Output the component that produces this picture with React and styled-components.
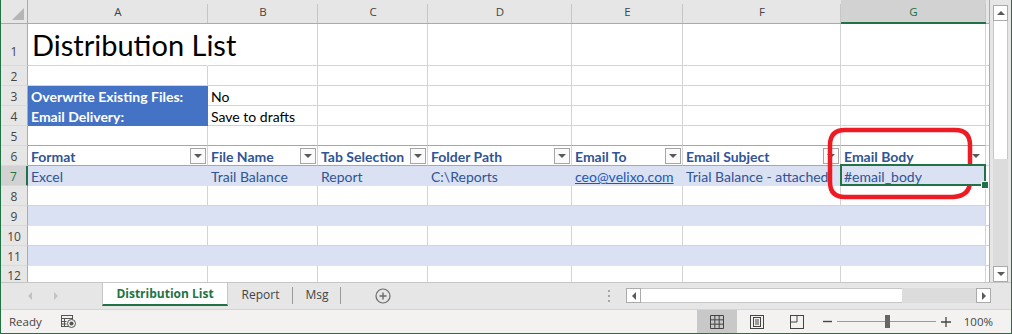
import React from 'react';
import styled, { createGlobalStyle } from 'styled-components';

// Excel-like sheet: Distribution List

const GREEN = '#217346';
const GRID = '#d4d4d4';
const BAND = '#d9e1f2';
const TABLE_RULE = '#8ea9db';
const TABLE_TEXT = '#305496';
const LABEL_FILL = '#4472c4';

const GlobalStyle = createGlobalStyle`
  html, body { margin: 0; padding: 0; background: #fff; }
  body { font-family: Lato, "Liberation Sans", sans-serif; }
  * { box-sizing: border-box; }
`;

const Window = styled.div`
  position: relative;
  width: 1012px;
  height: 334px;
  border: 1px solid ${GREEN};
  border-top: none;
  display: flex;
  flex-direction: column;
  background: #fff;
  overflow: hidden;
`;

const Workspace = styled.div`
  display: flex;
  height: 282px;
`;

const Sheet = styled.div`
  width: 989px;
  display: grid;
  grid-template-columns: 27px 180px 110px 110px 144px 111px 158px 145px 1fr;
  grid-template-rows: 24px 42px repeat(10, 20px) 1fr;
  border-right: 1px solid #ababab;
  overflow: hidden;
`;

const Corner = styled.div`
  background: #e6e6e6;
  border-right: 1px solid #ababab;
  border-bottom: 1px solid #ababab;
  display: flex;
  align-items: flex-end;
  justify-content: flex-end;
  padding: 0 3px 3px 0;
`;

const ColHead = styled.div`
  background-color: ${(p) => (p.$active ? '#d2d2d2' : '#e6e6e6')};
  background-image: linear-gradient(#c6c6c6, #c6c6c6);
  background-size: 1px calc(100% - 4px);
  background-position: right bottom;
  background-repeat: no-repeat;
  border-bottom: ${(p) => (p.$active ? `2px solid ${GREEN}` : '1px solid #ababab')};
  display: flex;
  align-items: center;
  justify-content: center;
  padding-top: ${(p) => (p.$active ? '1px' : '0')};
  font: 11.5px "Open Sans", sans-serif;
  color: ${(p) => (p.$active ? GREEN : '#444')};
`;

const RowHead = styled.div`
  background: ${(p) => (p.$active ? '#d2d2d2' : '#e6e6e6')};
  border-right: ${(p) => (p.$active ? `2px solid ${GREEN}` : '1px solid #ababab')};
  border-bottom: 1px solid #d9d9d9;
  display: flex;
  align-items: center;
  justify-content: center;
  padding-top: ${(p) => (p.$tall ? '14px' : '1px')};
  font: 12px "Open Sans", sans-serif;
  color: ${(p) => (p.$active ? GREEN : '#444')};
`;

const Cell = styled.div`
  position: relative;
  z-index: ${(p) => p.$z || 0};
  display: flex;
  align-items: center;
  padding: 2px 1px 0 3px;
  background: ${(p) => p.$fill || '#fff'};
  border-right: 1px solid ${(p) => p.$edge || p.$fill || GRID};
  border-bottom: 1px solid ${(p) => p.$rule || p.$fill || GRID};
  color: ${(p) => p.$color || '#000'};
  font-size: 14px;
  font-weight: ${(p) => (p.$bold ? 700 : 400)};
  white-space: nowrap;
`;

const TitleCell = styled(Cell)`
  font-size: 29px;
  padding: 0 0 0 4px;
  border-right-color: #fff;
  z-index: 1;
`;

const HeadCell = styled(Cell)`
  color: ${TABLE_TEXT};
  font-weight: 700;
  padding: 1px 1px 0 3px;
  border-bottom-color: ${TABLE_RULE};
`;

const FilterBtn = styled.span`
  margin-left: auto;
  flex: none;
  width: 16px;
  height: 16px;
  border: 1px solid ${(p) => (p.$plain ? 'transparent' : '#a6a6a6')};
  background: ${(p) => (p.$plain ? 'transparent' : '#fafafa')};
  display: flex;
  align-items: center;
  justify-content: center;
  &::after {
    content: '';
    border-left: 4px solid transparent;
    border-right: 4px solid transparent;
    border-top: 4px solid #595959;
  }
`;

const Link = styled.span`
  color: #2058b8;
  text-decoration: underline;
`;

const Selection = styled.div`
  position: absolute;
  left: -1px;
  top: -2px;
  right: -1px;
  bottom: -1px;
  border: 2px solid ${GREEN};
  &::after {
    content: '';
    position: absolute;
    right: -5px;
    bottom: -5px;
    width: 6px;
    height: 6px;
    background: ${GREEN};
    border: 1px solid #fff;
  }
`;

const VScroll = styled.div`
  flex: 1;
  background: #e6e6e6;
  display: flex;
  flex-direction: column;
  padding: 5px 3px 0 3px;
`;

const ScrollBtn = styled.div`
  flex: none;
  width: ${(p) => (p.$h ? '15px' : '100%')};
  height: ${(p) => (p.$h ? '100%' : '16px')};
  background: #fff;
  border: 1px solid #ababab;
  display: flex;
  align-items: center;
  justify-content: center;
`;

const VThumb = styled.div`
  height: 138px;
  background: #fff;
  border-left: 1px solid #c6c6c6;
  border-right: 1px solid #c6c6c6;
`;

const VTrack = styled.div`
  flex: 1;
  background: #dcdcdc;
`;

const TabBar = styled.div`
  height: 27px;
  background: #e6e6e6;
  border-top: 1px solid #c6c6c6;
  display: flex;
  align-items: flex-start;
  padding-right: 20px;
`;

const TabNav = styled.div`
  width: 101px;
  height: 25px;
  display: flex;
  align-items: center;
  gap: 22px;
  padding-left: 27px;
`;

const Tab = styled.div`
  height: ${(p) => (p.$active ? '23px' : '25px')};
  width: ${(p) => p.$w}px;
  display: flex;
  align-items: center;
  justify-content: center;
  font: ${(p) => (p.$active ? 700 : 400)} 12px "Open Sans", sans-serif;
  color: ${(p) => (p.$active ? GREEN : '#444')};
  background: ${(p) => (p.$active ? '#fff' : 'transparent')};
  border-left: ${(p) => (p.$active ? '1px solid #c6c6c6' : 'none')};
  border-right: ${(p) => (p.$active ? '1px solid #c6c6c6' : 'none')};
  border-bottom: ${(p) => (p.$active ? `2px solid ${GREEN}` : 'none')};
  position: relative;
  padding-bottom: ${(p) => (p.$active ? '0' : '2px')};
  &::after {
    content: '';
    display: ${(p) => (p.$sep ? 'block' : 'none')};
    position: absolute;
    right: 0;
    top: 4px;
    height: 17px;
    width: 1px;
    background: #9a9a9a;
  }
`;

const AddSheet = styled.div`
  width: 84px;
  height: 25px;
  display: flex;
  align-items: center;
  justify-content: center;
`;

const Spacer = styled.div`
  flex: 1;
`;

const Grip = styled.div`
  height: 25px;
  width: 6px;
  margin-right: 14px;
  display: flex;
  flex-direction: column;
  align-items: center;
  justify-content: center;
  gap: 3px;
  & > i {
    width: 2px;
    height: 2px;
    background: #a6a6a6;
  }
`;

const HScroll = styled.div`
  width: 365px;
  height: 15px;
  margin-top: 5px;
  display: flex;
`;

const HThumb = styled.div`
  width: 261px;
  background: #fff;
  border-top: 1px solid #c6c6c6;
  border-bottom: 1px solid #c6c6c6;
`;

const HTrack = styled.div`
  flex: 1;
  background: #dcdcdc;
`;

const StatusBar = styled.div`
  height: 24px;
  background: #f3f2f1;
  border-top: 1px solid #d4d4d4;
  display: flex;
  align-items: stretch;
  padding: 0 18px 0 8px;
  font: 11.5px "Open Sans", sans-serif;
  color: #444;
`;

const StatusText = styled.div`
  display: flex;
  align-items: center;
  margin-left: ${(p) => p.$ml || 0}px;
`;

const StatusIcon = styled.div`
  display: flex;
  align-items: center;
  margin-left: ${(p) => p.$ml || 0}px;
`;

const ViewBtn = styled.div`
  width: 40px;
  display: flex;
  align-items: center;
  justify-content: center;
  background: ${(p) => (p.$active ? '#c8c8c8' : 'transparent')};
`;

const ZoomSlider = styled.div`
  position: relative;
  width: 99px;
  margin-left: 5px;
  display: flex;
  align-items: center;
  &::before {
    content: '';
    width: 100%;
    height: 1px;
    background: #9a9a9a;
  }
`;

const SliderThumb = styled.span`
  position: absolute;
  left: 48px;
  top: 5px;
  width: 5px;
  height: 13px;
  background: #666;
`;

const Annotation = styled.svg`
  position: absolute;
  left: 824px;
  top: 125px;
  pointer-events: none;
`;

const COLS = ['A', 'B', 'C', 'D', 'E', 'F', 'G'];
const HEADERS = ['Format', 'File Name', 'Tab Selection', 'Folder Path', 'Email To', 'Email Subject', 'Email Body'];
const DATA = ['Excel', 'Trail Balance', 'Report', 'C:\\Reports', 'ceo@velixo.com', 'Trial Balance - attached', '#email_body'];

const ROWS = [
  { n: 1, tall: true },
  { n: 2 },
  { n: 3, label: 'Overwrite Existing Files:', value: 'No' },
  { n: 4, label: 'Email Delivery:', value: 'Save to drafts' },
  { n: 5, tableTop: true },
  { n: 6, header: true },
  { n: 7, band: true, data: true, active: true },
  { n: 8 },
  { n: 9, band: true },
  { n: 10 },
  { n: 11, band: true },
  { n: 12 },
];

const Arrow = ({ dir, color = '#595959', size = 4 }) => {
  const pts = {
    up: `0,${size} ${size},0 ${size * 2},${size}`,
    down: `0,0 ${size * 2},0 ${size},${size}`,
    left: `${size},0 ${size},${size * 2} 0,${size}`,
    right: `0,0 ${size},${size} 0,${size * 2}`,
  }[dir];
  const vertical = dir === 'up' || dir === 'down';
  return (
    <svg width={vertical ? size * 2 : size} height={vertical ? size : size * 2}>
      <polygon points={pts} fill={color} />
    </svg>
  );
};

function renderCell(r, i) {
  const key = `${r.n}-${i}`;
  if (r.tall && i === 0) return <TitleCell key={key}>Distribution List</TitleCell>;
  if (r.label && i === 0)
    return (
      <Cell key={key} $fill={LABEL_FILL} $color="#fff" $bold>
        {r.label}
      </Cell>
    );
  if (r.label && i === 1) return <Cell key={key}>{r.value}</Cell>;
  if (r.tableTop) return <Cell key={key} $rule={TABLE_RULE} />;
  if (r.header)
    return (
      <HeadCell key={key}>
        {HEADERS[i]}
        <FilterBtn $plain={i === 6} />
      </HeadCell>
    );
  if (r.data)
    return (
      <Cell key={key} $fill={BAND} $edge={i === 6 ? GRID : BAND} $color={TABLE_TEXT} $z={i === 6 ? 2 : 0}>
        {i === 4 ? <Link>{DATA[i]}</Link> : DATA[i]}
        {i === 6 && <Selection />}
      </Cell>
    );
  if (r.band) return <Cell key={key} $fill={BAND} $edge={i === 6 ? GRID : BAND} />;
  return <Cell key={key} />;
}

export default function App() {
  return (
    <>
      <GlobalStyle />
      <Window>
        <Workspace>
          <Sheet>
            <Corner>
              <svg width="12" height="12">
                <polygon points="12,0 12,12 0,12" fill="#b5b5b5" />
              </svg>
            </Corner>
            {COLS.map((c) => (
              <ColHead key={c} $active={c === 'G'}>
                {c}
              </ColHead>
            ))}
            <ColHead />
            {ROWS.map((r) => (
              <React.Fragment key={r.n}>
                <RowHead $active={r.active} $tall={r.tall}>
                  {r.n}
                </RowHead>
                {COLS.map((c, i) => renderCell(r, i))}
                <Cell />
              </React.Fragment>
            ))}
          </Sheet>
          <VScroll>
            <ScrollBtn>
              <Arrow dir="up" />
            </ScrollBtn>
            <VThumb />
            <VTrack />
            <ScrollBtn>
              <Arrow dir="down" />
            </ScrollBtn>
          </VScroll>
        </Workspace>

        <TabBar>
          <TabNav>
            <Arrow dir="left" color="#c2c2c2" />
            <Arrow dir="right" color="#c2c2c2" />
          </TabNav>
          <Tab $active $w={126}>Distribution List</Tab>
          <Tab $w={65} $sep>Report</Tab>
          <Tab $w={48} $sep>Msg</Tab>
          <AddSheet>
            <svg width="16" height="16" viewBox="0 0 16 16">
              <circle cx="8" cy="8" r="7" fill="none" stroke="#6a6a6a" strokeWidth="1.2" />
              <path d="M8 4.5v7M4.5 8h7" stroke="#6a6a6a" strokeWidth="1.4" />
            </svg>
          </AddSheet>
          <Spacer />
          <Grip>
            <i />
            <i />
            <i />
          </Grip>
          <HScroll>
            <ScrollBtn $h>
              <Arrow dir="left" />
            </ScrollBtn>
            <HThumb />
            <HTrack />
            <ScrollBtn $h>
              <Arrow dir="right" />
            </ScrollBtn>
          </HScroll>
        </TabBar>

        <StatusBar>
          <StatusText>Ready</StatusText>
          <StatusIcon $ml={19}>
            <svg width="15" height="13" viewBox="0 0 15 13">
              <rect x="0.5" y="0.5" width="11" height="11" fill="none" stroke="#555" />
              <path d="M0.5 3.5h11M3.5 3.5v8M0.5 6.5h5M0.5 9h5" stroke="#555" />
              <circle cx="10.5" cy="8.5" r="4" fill="#f3f2f1" stroke="#555" />
              <circle cx="10.5" cy="8.5" r="2" fill="#555" />
            </svg>
          </StatusIcon>
          <Spacer />
          <ViewBtn $active>
            <svg width="14" height="14" viewBox="0 0 14 14">
              <path
                d="M0.5 0.5h13v13h-13zM4.83 0.5v13M9.17 0.5v13M0.5 4.83h13M0.5 9.17h13"
                fill="none"
                stroke="#444"
              />
            </svg>
          </ViewBtn>
          <ViewBtn>
            <svg width="14" height="14" viewBox="0 0 14 14">
              <rect x="0.5" y="0.5" width="13" height="13" fill="none" stroke="#444" />
              <rect x="3.5" y="2.5" width="7" height="9" fill="none" stroke="#444" />
              <path d="M5 5h4M5 7h4M5 9h4" stroke="#444" />
            </svg>
          </ViewBtn>
          <ViewBtn>
            <svg width="14" height="14" viewBox="0 0 14 14">
              <rect x="0.5" y="0.5" width="13" height="13" fill="none" stroke="#444" />
              <path d="M7 0.5v6.5H0.5" fill="none" stroke="#444" />
            </svg>
          </ViewBtn>
          <StatusIcon $ml={6}>
            <svg width="9" height="9">
              <path d="M0 4.5h9" stroke="#444" strokeWidth="1.4" />
            </svg>
          </StatusIcon>
          <ZoomSlider>
            <SliderThumb />
          </ZoomSlider>
          <StatusIcon $ml={5}>
            <svg width="10" height="10">
              <path d="M0 5h10M5 0v10" stroke="#444" strokeWidth="1.3" />
            </svg>
          </StatusIcon>
          <StatusText $ml={13}>100%</StatusText>
        </StatusBar>

        <Annotation width="150" height="78" viewBox="0 0 150 78">
          <path
            d="M20 5 H130 Q145 5 145 20 V56 Q145 71 128 72 H20 Q5 72 5 57 V20 Q5 5 20 5 Z"
            fill="none"
            stroke="#ed1c24"
            strokeWidth="4.5"
          />
        </Annotation>
      </Window>
    </>
  );
}
